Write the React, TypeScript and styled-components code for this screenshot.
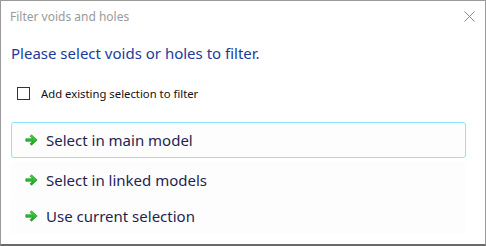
import React, { useState } from 'react';
import styled, { createGlobalStyle } from 'styled-components';

const GlobalStyle = createGlobalStyle`
  html, body {
    margin: 0;
    padding: 0;
    background: #ffffff;
  }
  body {
    font-family: 'Noto Sans', 'Open Sans', sans-serif;
  }
`;

const actions = [
  'Select in main model',
  'Select in linked models',
  'Use current selection',
];

const ArrowIcon: React.FC = () => (
  <svg width="13" height="12" viewBox="0 0 13 12">
    <defs>
      <linearGradient id="arrowGrad" x1="0" y1="0" x2="0" y2="1">
        <stop offset="0" stopColor="#4fd84a" />
        <stop offset="1" stopColor="#14a01a" />
      </linearGradient>
    </defs>
    <path
      d="M6.5 0.8 L12.2 6 L6.5 11.2 L5 9.7 L7.6 7.3 L0.8 7.3 L0.8 4.7 L7.6 4.7 L5 2.3 Z"
      fill="url(#arrowGrad)"
      stroke="#138a1a"
      strokeWidth="0.6"
      strokeLinejoin="round"
    />
  </svg>
);

const App: React.FC = () => {
  const [addExisting, setAddExisting] = useState(false);
  const [hovered, setHovered] = useState(0);

  return (
    <>
      <GlobalStyle />
      <Window>
        <TitleBar>
          <Title>Filter voids and holes</Title>
          <CloseButton aria-label="Close">
            <svg width="11" height="11" viewBox="0 0 11 11">
              <path d="M0.5 0.5 L10.5 10.5 M10.5 0.5 L0.5 10.5" stroke="#8a8a8a" strokeWidth="1" />
            </svg>
          </CloseButton>
        </TitleBar>
        <Body>
          <Heading>Please select voids or holes to filter.</Heading>
          <CheckRow onClick={() => setAddExisting(!addExisting)}>
            <CheckBox $checked={addExisting} />
            <CheckLabel>Add existing selection to filter</CheckLabel>
          </CheckRow>
          <ActionList>
            {actions.map((label, i) => (
              <ActionButton
                key={label}
                $active={hovered === i}
                onMouseEnter={() => setHovered(i)}
              >
                <ArrowIcon />
                <ActionText>{label}</ActionText>
              </ActionButton>
            ))}
          </ActionList>
        </Body>
      </Window>
    </>
  );
};

export default App;

const Window = styled.div`
  box-sizing: border-box;
  width: 486px;
  height: 246px;
  border: 1px solid #9a9a9a;
  border-bottom: 2px solid #6a6a6a;
  background: #ffffff;
  display: flex;
  flex-direction: column;
`;

const TitleBar = styled.div`
  display: flex;
  align-items: center;
  justify-content: space-between;
  height: 30px;
  padding: 0 10px 0 9px;
`;

const Title = styled.span`
  font-size: 12px;
  color: #9a9a9a;
`;

const CloseButton = styled.button`
  border: none;
  background: none;
  padding: 0;
  display: flex;
  cursor: pointer;
`;

const Body = styled.div`
  display: flex;
  flex-direction: column;
  padding: 0 19px 0 10px;
`;

const Heading = styled.div`
  font-size: 15px;
  color: #1b3b9a;
  margin-top: 10px;
  height: 24px;
  line-height: 24px;
`;

const CheckRow = styled.label`
  display: flex;
  align-items: center;
  gap: 11px;
  margin-top: 20px;
  padding-left: 6px;
  height: 16px;
  cursor: pointer;
`;

const CheckBox = styled.span<{ $checked: boolean }>`
  box-sizing: border-box;
  width: 13px;
  height: 13px;
  border: 1px solid #333333;
  background: ${(p) => (p.$checked ? '#333333' : '#ffffff')};
`;

const CheckLabel = styled.span`
  font-size: 11.3px;
  color: #111111;
`;

const ActionList = styled.div`
  display: flex;
  flex-direction: column;
  margin-top: 21px;

  & > :first-child {
    margin-bottom: 4px;
  }
`;

const ActionButton = styled.div<{ $active: boolean }>`
  box-sizing: border-box;
  display: flex;
  align-items: center;
  gap: 8px;
  height: 36px;
  padding-left: 13px;
  border: 1px solid ${(p) => (p.$active ? '#8ae4fb' : 'transparent')};
  border-radius: 3px;
  background: #fdfdfd;
  cursor: pointer;
`;

const ActionText = styled.span`
  font-size: 15px;
  color: #1f1f52;
`;
